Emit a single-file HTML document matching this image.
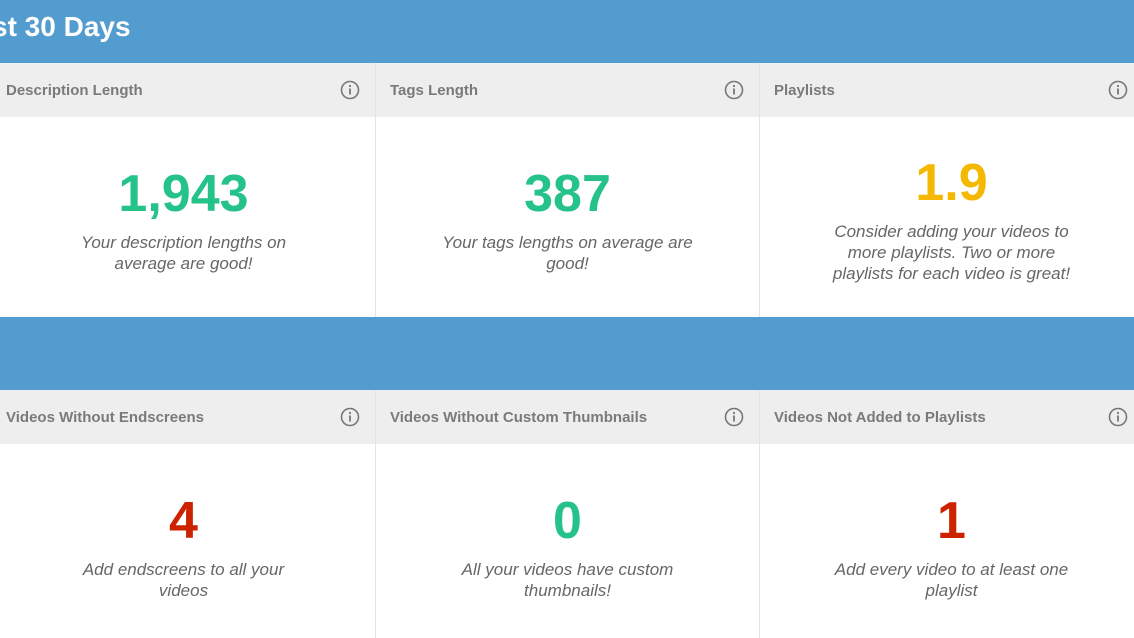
<!DOCTYPE html>
<html><head><style>
*{margin:0;padding:0;box-sizing:border-box}
body{width:1134px;height:638px;overflow:hidden;background:#fff;font-family:"Liberation Sans",sans-serif;position:relative}
.bar{position:absolute;left:0;width:1134px;background:#539ccf}
.title{position:absolute;left:-8px;top:10px;color:#fff;font-weight:bold;font-size:28px;line-height:34px}
.card{position:absolute;width:384px;border-right:1px solid #e4e4e4}
.hd{height:54px;background:#eeeeee;position:relative}
.hd span{position:absolute;left:14px;top:19px;font-size:15px;font-weight:bold;color:#7a7a7a}
.hd svg{position:absolute;left:348px;top:17px}
.num{position:absolute;left:0;width:383px;text-align:center;font-weight:bold;font-size:52px;line-height:60px}
.txt{position:absolute;left:50%;transform:translateX(-50%);width:240px;text-align:center;font-style:italic;font-size:17px;line-height:21px;color:#666}
</style></head><body>
<div class="bar" style="top:0;height:63px"><div class="title">st 30 Days</div></div>
<div class="bar" style="top:317px;height:73px"></div>

<div class="card" style="left:-8px;top:63px;height:254px"><div class="hd"><span>Description Length</span><svg width="20" height="20"><circle cx="10" cy="10" r="8.5" fill="none" stroke="#777" stroke-width="1.6"/><rect x="9.1" y="8.5" width="1.8" height="6" fill="#777"/><circle cx="10" cy="6" r="1.1" fill="#777"/></svg></div>
<div class="num" style="top:101px;color:#25c28a">1,943</div><div class="txt" style="top:169px">Your description lengths on average are good!</div></div>
<div class="card" style="left:376px;top:63px;height:254px"><div class="hd"><span>Tags Length</span><svg width="20" height="20"><circle cx="10" cy="10" r="8.5" fill="none" stroke="#777" stroke-width="1.6"/><rect x="9.1" y="8.5" width="1.8" height="6" fill="#777"/><circle cx="10" cy="6" r="1.1" fill="#777"/></svg></div>
<div class="num" style="top:101px;color:#25c28a">387</div><div class="txt" style="top:169px;width:270px">Your tags lengths on average are good!</div></div>
<div class="card" style="left:760px;top:63px;height:254px"><div class="hd"><span>Playlists</span><svg width="20" height="20"><circle cx="10" cy="10" r="8.5" fill="none" stroke="#777" stroke-width="1.6"/><rect x="9.1" y="8.5" width="1.8" height="6" fill="#777"/><circle cx="10" cy="6" r="1.1" fill="#777"/></svg></div>
<div class="num" style="top:90px;color:#f5b800">1.9</div><div class="txt" style="top:158px;width:262px">Consider adding your videos to more playlists. Two or more playlists for each video is great!</div></div>

<div class="card" style="left:-8px;top:390px;height:248px"><div class="hd"><span>Videos Without Endscreens</span><svg width="20" height="20"><circle cx="10" cy="10" r="8.5" fill="none" stroke="#777" stroke-width="1.6"/><rect x="9.1" y="8.5" width="1.8" height="6" fill="#777"/><circle cx="10" cy="6" r="1.1" fill="#777"/></svg></div>
<div class="num" style="top:101px;color:#cc2200">4</div><div class="txt" style="top:169px;width:230px">Add endscreens to all your videos</div></div>
<div class="card" style="left:376px;top:390px;height:248px"><div class="hd"><span>Videos Without Custom Thumbnails</span><svg width="20" height="20"><circle cx="10" cy="10" r="8.5" fill="none" stroke="#777" stroke-width="1.6"/><rect x="9.1" y="8.5" width="1.8" height="6" fill="#777"/><circle cx="10" cy="6" r="1.1" fill="#777"/></svg></div>
<div class="num" style="top:101px;color:#25c28a">0</div><div class="txt" style="top:169px">All your videos have custom thumbnails!</div></div>
<div class="card" style="left:760px;top:390px;height:248px"><div class="hd"><span>Videos Not Added to Playlists</span><svg width="20" height="20"><circle cx="10" cy="10" r="8.5" fill="none" stroke="#777" stroke-width="1.6"/><rect x="9.1" y="8.5" width="1.8" height="6" fill="#777"/><circle cx="10" cy="6" r="1.1" fill="#777"/></svg></div>
<div class="num" style="top:101px;color:#cc2200">1</div><div class="txt" style="top:169px">Add every video to at least one playlist</div></div>
</body></html>
